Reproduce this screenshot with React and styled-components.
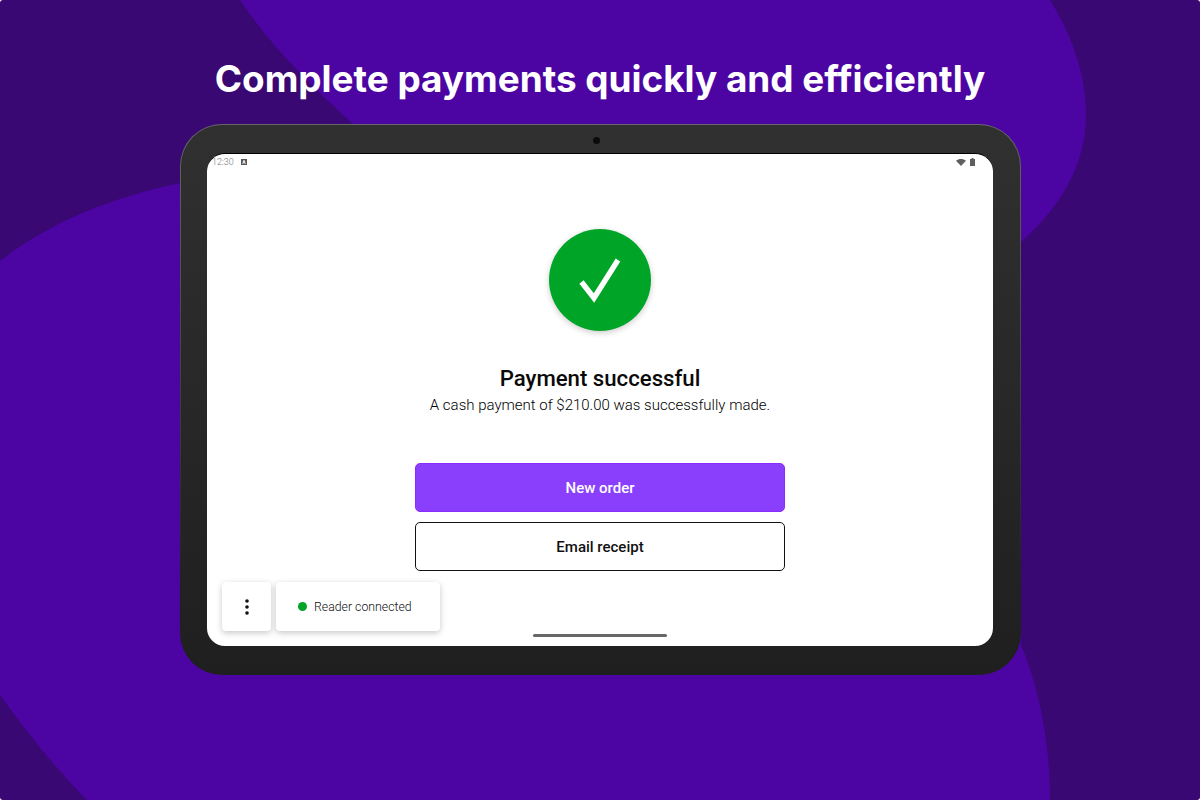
import React from 'react'
import styled, { createGlobalStyle } from 'styled-components'

const GlobalStyle = createGlobalStyle`
  html, body {
    margin: 0;
    padding: 0;
    background: #fff;
  }
`

const Backdrop = () => (
  <BackdropSvg viewBox="0 0 1200 800">
    <path
      fill="#4c05a3"
      d="M240 0 L1050 0 C1075 40 1086 80 1086 115 C1086 165 1060 208 1021 242 L1021 645 C1040 690 1050 745 1050 800 L87 800 C55 768 25 730 0 695 L0 261 C50 222 110 198 180 183 L353 183 L353 124 C310 85 270 45 240 0 Z"
    />
  </BackdropSvg>
)

const App = () => (
  <Page>
    <GlobalStyle />
    <Backdrop />
    <Title>Complete payments quickly and efficiently</Title>
    <Tablet>
      <Camera />
      <Screen>
        <StatusBar>
          <StatusLeft>
            <Clock>12:30</Clock>
            <NotifyIcon>A</NotifyIcon>
          </StatusLeft>
          <StatusRight>
            <svg width="10" height="7" viewBox="0 0 10 7">
              <path fill="#5f5f5f" d="M0 1.8 C2.8 -0.5 7.2 -0.5 10 1.8 L5 7 Z" />
            </svg>
            <svg width="5" height="8" viewBox="0 0 5 8">
              <path fill="#5f5f5f" d="M1.5 0 H3.5 V1 H5 V8 H0 V1 H1.5 Z" />
            </svg>
          </StatusRight>
        </StatusBar>
        <Content>
          <SuccessBadge>
            <svg width="42" height="46" viewBox="0 0 42 46">
              <path d="M2.5 25 L15 41 L39 3" fill="none" stroke="#fff" strokeWidth="5.4" />
            </svg>
          </SuccessBadge>
          <Heading>Payment successful</Heading>
          <Message>A cash payment of $210.00 was successfully made.</Message>
          <PrimaryButton>New order</PrimaryButton>
          <OutlineButton>Email receipt</OutlineButton>
        </Content>
        <Footer>
          <MenuCard>
            <svg width="4" height="16" viewBox="0 0 4 16">
              <circle cx="2" cy="2" r="1.8" fill="#111" />
              <circle cx="2" cy="8" r="1.8" fill="#111" />
              <circle cx="2" cy="14" r="1.8" fill="#111" />
            </svg>
          </MenuCard>
          <ReaderCard>
            <ReaderDot />
            <ReaderLabel>Reader connected</ReaderLabel>
          </ReaderCard>
        </Footer>
        <HomeIndicator />
      </Screen>
    </Tablet>
  </Page>
)

const Page = styled.div`
  position: relative;
  width: 1200px;
  height: 800px;
  overflow: hidden;
  border-radius: 3px;
  background: #390873;
  display: flex;
  flex-direction: column;
  align-items: center;
`

const BackdropSvg = styled.svg`
  position: absolute;
  top: 0;
  left: 0;
  width: 1200px;
  height: 800px;
`

const Title = styled.h1`
  position: relative;
  margin: 55px 0 0;
  height: 48px;
  font-family: Inter, sans-serif;
  font-size: 36.9px;
  line-height: 48px;
  font-weight: 700;
  color: #fff;
  white-space: nowrap;
`

const Tablet = styled.div`
  position: relative;
  box-sizing: border-box;
  width: 841px;
  height: 551px;
  margin-top: 21px;
  margin-left: 1px;
  padding: 28px 27px 28px 26px;
  border-radius: 42px;
  border: 1px solid transparent;
  background:
    linear-gradient(#303030, #1f1f1f) padding-box,
    linear-gradient(#666, #3a3a3a 55%, #1f1f1f 85%) border-box;
`

const Camera = styled.div`
  position: absolute;
  top: 12px;
  left: 412px;
  width: 7px;
  height: 7px;
  border-radius: 50%;
  background: #0b0b0b;
`

const Screen = styled.div`
  position: relative;
  height: 493px;
  border-radius: 18px;
  background: #fff;
  border-top: 1px solid #000;
  box-sizing: border-box;
  display: flex;
  flex-direction: column;
  overflow: hidden;
`

const StatusBar = styled.div`
  display: flex;
  justify-content: space-between;
  align-items: center;
  height: 16px;
  padding: 0 18px 0 5px;
`

const StatusLeft = styled.div`
  display: flex;
  align-items: center;
  gap: 7px;
`

const StatusRight = styled.div`
  display: flex;
  align-items: center;
  gap: 4px;
`

const Clock = styled.span`
  font-family: Roboto, sans-serif;
  font-size: 9px;
  font-weight: 300;
  color: #777;
`

const NotifyIcon = styled.span`
  width: 6px;
  height: 6px;
  background: #555;
  color: #fff;
  font-family: Roboto, sans-serif;
  font-size: 5px;
  line-height: 6px;
  font-weight: 700;
  text-align: center;
`

const Content = styled.div`
  display: flex;
  flex-direction: column;
  align-items: center;
  flex: 1;
  padding-top: 59px;
`

const SuccessBadge = styled.div`
  width: 102px;
  height: 102px;
  border-radius: 50%;
  background: #00a426;
  box-shadow: 0 2px 6px rgba(0, 0, 0, 0.2);
  display: flex;
  align-items: center;
  justify-content: center;
`

const Heading = styled.h2`
  margin: 33px 0 0;
  font-family: Roboto, sans-serif;
  font-size: 22.2px;
  line-height: 28px;
  font-weight: 500;
  color: #0a0a0a;
`

const Message = styled.p`
  margin: 3px 0 0;
  font-family: Roboto, sans-serif;
  font-size: 15px;
  line-height: 20px;
  font-weight: 300;
  color: #000;
`

const ActionButton = styled.button`
  box-sizing: border-box;
  width: 370px;
  height: 49px;
  border-radius: 5px;
  font-family: Roboto, sans-serif;
  font-size: 15px;
  font-weight: 500;
  padding: 0;
`

const PrimaryButton = styled(ActionButton)`
  margin-top: 48px;
  background: #8a3ffc;
  border: 1px solid #8a2bff;
  color: #fff;
`

const OutlineButton = styled(ActionButton)`
  margin-top: 10px;
  background: #fff;
  border: 1px solid #111;
  color: #111;
`

const Footer = styled.div`
  display: flex;
  gap: 5px;
  padding: 0 0 15px 15px;
`

const Card = styled.div`
  box-sizing: border-box;
  height: 49px;
  border-radius: 4px;
  background: #fff;
  box-shadow: 0 2px 6px rgba(0, 0, 0, 0.22);
  display: flex;
  align-items: center;
`

const MenuCard = styled(Card)`
  width: 49px;
  justify-content: center;
`

const ReaderCard = styled(Card)`
  width: 164px;
  padding-left: 22px;
  gap: 7px;
`

const ReaderDot = styled.span`
  width: 9px;
  height: 9px;
  border-radius: 50%;
  background: #00a426;
`

const ReaderLabel = styled.span`
  font-family: Roboto, sans-serif;
  font-size: 12.3px;
  font-weight: 300;
  color: #111;
`

const HomeIndicator = styled.div`
  position: absolute;
  left: 326px;
  bottom: 9px;
  width: 134px;
  height: 3px;
  border-radius: 2px;
  background: #666;
`

export default App
